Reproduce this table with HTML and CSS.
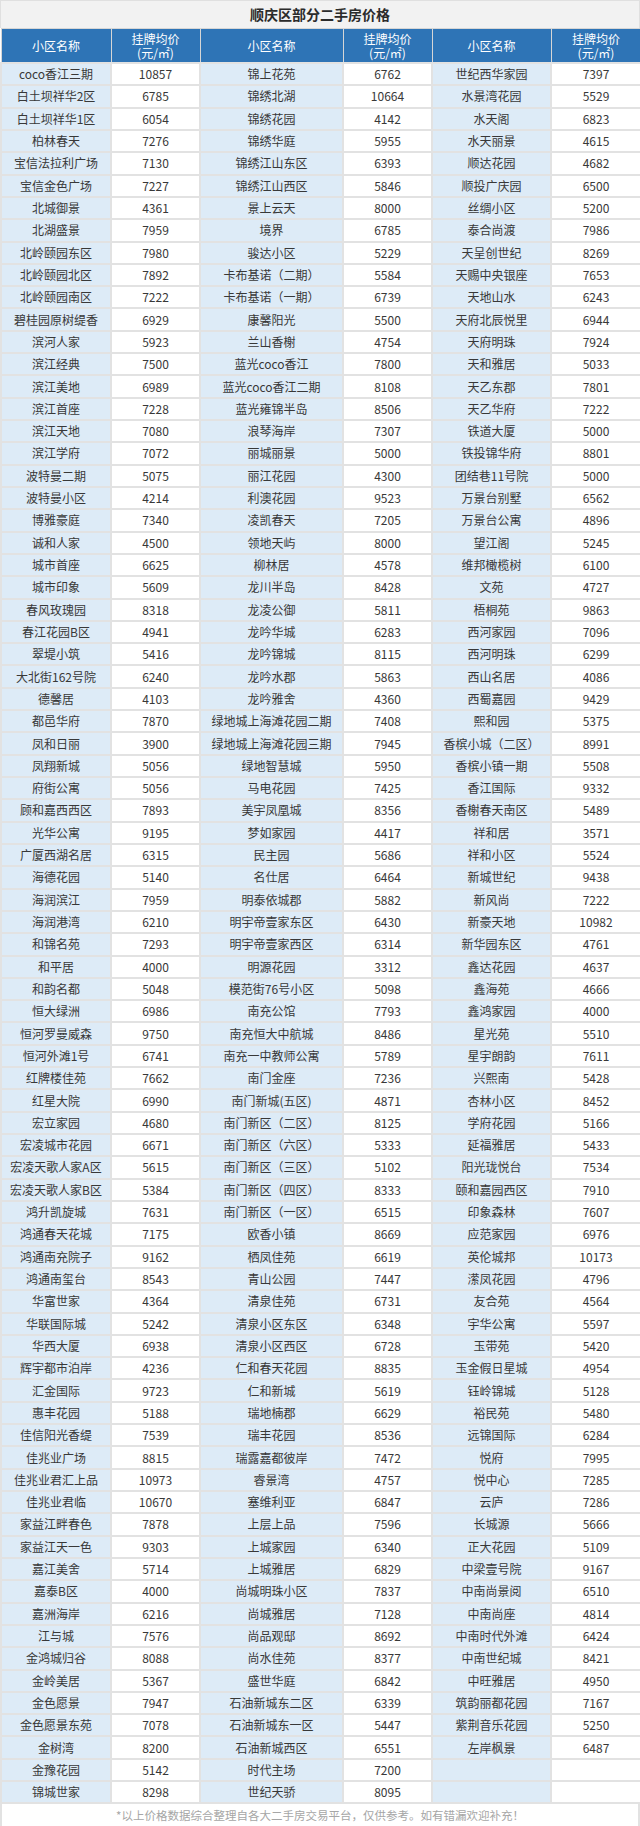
FILE: index.html
```html
<!DOCTYPE html>
<html lang="zh-CN">
<head>
<meta charset="utf-8">
<title>顺庆区部分二手房价格</title>
<link rel="stylesheet" href="styles.css">
</head>
<body>
<div class="sheet">
  <div class="title">顺庆区部分二手房价格</div>
  <table class="prices">
    <colgroup>
      <col class="w-name1"><col class="w-price"><col class="w-name2"><col class="w-price"><col class="w-name3"><col class="w-price-last">
    </colgroup>
    <thead>
      <tr>
        <th>小区名称</th><th>挂牌均价<br>(元/㎡)</th>
        <th>小区名称</th><th>挂牌均价<br>(元/㎡)</th>
        <th>小区名称</th><th>挂牌均价<br>(元/㎡)</th>
      </tr>
    </thead>
    <tbody>
      <tr><td class="n">coco香江三期</td><td>10857</td><td class="n">锦上花苑</td><td>6762</td><td class="n">世纪西华家园</td><td>7397</td></tr>
      <tr><td class="n">白土坝祥华2区</td><td>6785</td><td class="n">锦绣北湖</td><td>10664</td><td class="n">水景湾花园</td><td>5529</td></tr>
      <tr><td class="n">白土坝祥华1区</td><td>6054</td><td class="n">锦绣花园</td><td>4142</td><td class="n">水天阁</td><td>6823</td></tr>
      <tr><td class="n">柏林春天</td><td>7276</td><td class="n">锦绣华庭</td><td>5955</td><td class="n">水天丽景</td><td>4615</td></tr>
      <tr><td class="n">宝信法拉利广场</td><td>7130</td><td class="n">锦绣江山东区</td><td>6393</td><td class="n">顺达花园</td><td>4682</td></tr>
      <tr><td class="n">宝信金色广场</td><td>7227</td><td class="n">锦绣江山西区</td><td>5846</td><td class="n">顺投广庆园</td><td>6500</td></tr>
      <tr><td class="n">北城御景</td><td>4361</td><td class="n">景上云天</td><td>8000</td><td class="n">丝绸小区</td><td>5200</td></tr>
      <tr><td class="n">北湖盛景</td><td>7959</td><td class="n">境界</td><td>6785</td><td class="n">泰合尚渡</td><td>7986</td></tr>
      <tr><td class="n">北岭颐园东区</td><td>7980</td><td class="n">骏达小区</td><td>5229</td><td class="n">天呈创世纪</td><td>8269</td></tr>
      <tr><td class="n">北岭颐园北区</td><td>7892</td><td class="n">卡布基诺（二期）</td><td>5584</td><td class="n">天赐中央银座</td><td>7653</td></tr>
      <tr><td class="n">北岭颐园南区</td><td>7222</td><td class="n">卡布基诺（一期）</td><td>6739</td><td class="n">天地山水</td><td>6243</td></tr>
      <tr><td class="n">碧桂园原树缇香</td><td>6929</td><td class="n">康馨阳光</td><td>5500</td><td class="n">天府北辰悦里</td><td>6944</td></tr>
      <tr><td class="n">滨河人家</td><td>5923</td><td class="n">兰山香榭</td><td>4754</td><td class="n">天府明珠</td><td>7924</td></tr>
      <tr><td class="n">滨江经典</td><td>7500</td><td class="n">蓝光coco香江</td><td>7800</td><td class="n">天和雅居</td><td>5033</td></tr>
      <tr><td class="n">滨江美地</td><td>6989</td><td class="n">蓝光coco香江二期</td><td>8108</td><td class="n">天乙东郡</td><td>7801</td></tr>
      <tr><td class="n">滨江首座</td><td>7228</td><td class="n">蓝光雍锦半岛</td><td>8506</td><td class="n">天乙华府</td><td>7222</td></tr>
      <tr><td class="n">滨江天地</td><td>7080</td><td class="n">浪琴海岸</td><td>7307</td><td class="n">铁道大厦</td><td>5000</td></tr>
      <tr><td class="n">滨江学府</td><td>7072</td><td class="n">丽城丽景</td><td>5000</td><td class="n">铁投锦华府</td><td>8801</td></tr>
      <tr><td class="n">波特曼二期</td><td>5075</td><td class="n">丽江花园</td><td>4300</td><td class="n">团结巷11号院</td><td>5000</td></tr>
      <tr><td class="n">波特曼小区</td><td>4214</td><td class="n">利澳花园</td><td>9523</td><td class="n">万景台别墅</td><td>6562</td></tr>
      <tr><td class="n">博雅豪庭</td><td>7340</td><td class="n">凌凯春天</td><td>7205</td><td class="n">万景台公寓</td><td>4896</td></tr>
      <tr><td class="n">诚和人家</td><td>4500</td><td class="n">领地天屿</td><td>8000</td><td class="n">望江阁</td><td>5245</td></tr>
      <tr><td class="n">城市首座</td><td>6625</td><td class="n">柳林居</td><td>4578</td><td class="n">维邦橄榄树</td><td>6100</td></tr>
      <tr><td class="n">城市印象</td><td>5609</td><td class="n">龙川半岛</td><td>8428</td><td class="n">文苑</td><td>4727</td></tr>
      <tr><td class="n">春风玫瑰园</td><td>8318</td><td class="n">龙凌公御</td><td>5811</td><td class="n">梧桐苑</td><td>9863</td></tr>
      <tr><td class="n">春江花园B区</td><td>4941</td><td class="n">龙吟华城</td><td>6283</td><td class="n">西河家园</td><td>7096</td></tr>
      <tr><td class="n">翠堤小筑</td><td>5416</td><td class="n">龙吟锦城</td><td>8115</td><td class="n">西河明珠</td><td>6299</td></tr>
      <tr><td class="n">大北街162号院</td><td>6240</td><td class="n">龙吟水郡</td><td>5863</td><td class="n">西山名居</td><td>4086</td></tr>
      <tr><td class="n">德馨居</td><td>4103</td><td class="n">龙吟雅舍</td><td>4360</td><td class="n">西蜀嘉园</td><td>9429</td></tr>
      <tr><td class="n">都邑华府</td><td>7870</td><td class="n">绿地城上海滩花园二期</td><td>7408</td><td class="n">熙和园</td><td>5375</td></tr>
      <tr><td class="n">凤和日丽</td><td>3900</td><td class="n">绿地城上海滩花园三期</td><td>7945</td><td class="n">香槟小城（二区）</td><td>8991</td></tr>
      <tr><td class="n">凤翔新城</td><td>5056</td><td class="n">绿地智慧城</td><td>5950</td><td class="n">香槟小镇一期</td><td>5508</td></tr>
      <tr><td class="n">府街公寓</td><td>5056</td><td class="n">马电花园</td><td>7425</td><td class="n">香江国际</td><td>9332</td></tr>
      <tr><td class="n">顾和嘉西西区</td><td>7893</td><td class="n">美宇凤凰城</td><td>8356</td><td class="n">香榭春天南区</td><td>5489</td></tr>
      <tr><td class="n">光华公寓</td><td>9195</td><td class="n">梦如家园</td><td>4417</td><td class="n">祥和居</td><td>3571</td></tr>
      <tr><td class="n">广厦西湖名居</td><td>6315</td><td class="n">民主园</td><td>5686</td><td class="n">祥和小区</td><td>5524</td></tr>
      <tr><td class="n">海德花园</td><td>5140</td><td class="n">名仕居</td><td>6464</td><td class="n">新城世纪</td><td>9438</td></tr>
      <tr><td class="n">海润滨江</td><td>7959</td><td class="n">明泰依城郡</td><td>5882</td><td class="n">新风尚</td><td>7222</td></tr>
      <tr><td class="n">海润港湾</td><td>6210</td><td class="n">明宇帝壹家东区</td><td>6430</td><td class="n">新豪天地</td><td>10982</td></tr>
      <tr><td class="n">和锦名苑</td><td>7293</td><td class="n">明宇帝壹家西区</td><td>6314</td><td class="n">新华园东区</td><td>4761</td></tr>
      <tr><td class="n">和平居</td><td>4000</td><td class="n">明源花园</td><td>3312</td><td class="n">鑫达花园</td><td>4637</td></tr>
      <tr><td class="n">和韵名都</td><td>5048</td><td class="n">模范街76号小区</td><td>5098</td><td class="n">鑫海苑</td><td>4666</td></tr>
      <tr><td class="n">恒大绿洲</td><td>6986</td><td class="n">南充公馆</td><td>7793</td><td class="n">鑫鸿家园</td><td>4000</td></tr>
      <tr><td class="n">恒河罗曼威森</td><td>9750</td><td class="n">南充恒大中航城</td><td>8486</td><td class="n">星光苑</td><td>5510</td></tr>
      <tr><td class="n">恒河外滩1号</td><td>6741</td><td class="n">南充一中教师公寓</td><td>5789</td><td class="n">星宇朗韵</td><td>7611</td></tr>
      <tr><td class="n">红牌楼佳苑</td><td>7662</td><td class="n">南门金座</td><td>7236</td><td class="n">兴熙南</td><td>5428</td></tr>
      <tr><td class="n">红星大院</td><td>6990</td><td class="n">南门新城(五区)</td><td>4871</td><td class="n">杏林小区</td><td>8452</td></tr>
      <tr><td class="n">宏立家园</td><td>4680</td><td class="n">南门新区（二区）</td><td>8125</td><td class="n">学府花园</td><td>5166</td></tr>
      <tr><td class="n">宏凌城市花园</td><td>6671</td><td class="n">南门新区（六区）</td><td>5333</td><td class="n">延福雅居</td><td>5433</td></tr>
      <tr><td class="n">宏凌天歌人家A区</td><td>5615</td><td class="n">南门新区（三区）</td><td>5102</td><td class="n">阳光珑悦台</td><td>7534</td></tr>
      <tr><td class="n">宏凌天歌人家B区</td><td>5384</td><td class="n">南门新区（四区）</td><td>8333</td><td class="n">颐和嘉园西区</td><td>7910</td></tr>
      <tr><td class="n">鸿升凯旋城</td><td>7631</td><td class="n">南门新区（一区）</td><td>6515</td><td class="n">印象森林</td><td>7607</td></tr>
      <tr><td class="n">鸿通春天花城</td><td>7175</td><td class="n">欧香小镇</td><td>8669</td><td class="n">应范家园</td><td>6976</td></tr>
      <tr><td class="n">鸿通南充院子</td><td>9162</td><td class="n">栖凤佳苑</td><td>6619</td><td class="n">英伦城邦</td><td>10173</td></tr>
      <tr><td class="n">鸿通南玺台</td><td>8543</td><td class="n">青山公园</td><td>7447</td><td class="n">潆凤花园</td><td>4796</td></tr>
      <tr><td class="n">华富世家</td><td>4364</td><td class="n">清泉佳苑</td><td>6731</td><td class="n">友合苑</td><td>4564</td></tr>
      <tr><td class="n">华联国际城</td><td>5242</td><td class="n">清泉小区东区</td><td>6348</td><td class="n">宇华公寓</td><td>5597</td></tr>
      <tr><td class="n">华西大厦</td><td>6938</td><td class="n">清泉小区西区</td><td>6728</td><td class="n">玉带苑</td><td>5420</td></tr>
      <tr><td class="n">辉宇都市泊岸</td><td>4236</td><td class="n">仁和春天花园</td><td>8835</td><td class="n">玉金假日星城</td><td>4954</td></tr>
      <tr><td class="n">汇金国际</td><td>9723</td><td class="n">仁和新城</td><td>5619</td><td class="n">钰岭锦城</td><td>5128</td></tr>
      <tr><td class="n">惠丰花园</td><td>5188</td><td class="n">瑞地楠郡</td><td>6629</td><td class="n">裕民苑</td><td>5480</td></tr>
      <tr><td class="n">佳信阳光香缇</td><td>7539</td><td class="n">瑞丰花园</td><td>8536</td><td class="n">远锦国际</td><td>6284</td></tr>
      <tr><td class="n">佳兆业广场</td><td>8815</td><td class="n">瑞露嘉都彼岸</td><td>7472</td><td class="n">悦府</td><td>7995</td></tr>
      <tr><td class="n">佳兆业君汇上品</td><td>10973</td><td class="n">睿景湾</td><td>4757</td><td class="n">悦中心</td><td>7285</td></tr>
      <tr><td class="n">佳兆业君临</td><td>10670</td><td class="n">塞维利亚</td><td>6847</td><td class="n">云庐</td><td>7286</td></tr>
      <tr><td class="n">家益江畔春色</td><td>7878</td><td class="n">上层上品</td><td>7596</td><td class="n">长城源</td><td>5666</td></tr>
      <tr><td class="n">家益江天一色</td><td>9303</td><td class="n">上城家园</td><td>6340</td><td class="n">正大花园</td><td>5109</td></tr>
      <tr><td class="n">嘉江美舍</td><td>5714</td><td class="n">上城雅居</td><td>6829</td><td class="n">中梁壹号院</td><td>9167</td></tr>
      <tr><td class="n">嘉泰B区</td><td>4000</td><td class="n">尚城明珠小区</td><td>7837</td><td class="n">中南尚景阅</td><td>6510</td></tr>
      <tr><td class="n">嘉洲海岸</td><td>6216</td><td class="n">尚城雅居</td><td>7128</td><td class="n">中南尚座</td><td>4814</td></tr>
      <tr><td class="n">江与城</td><td>7576</td><td class="n">尚品观邸</td><td>8692</td><td class="n">中南时代外滩</td><td>6424</td></tr>
      <tr><td class="n">金鸿城归谷</td><td>8088</td><td class="n">尚水佳苑</td><td>8377</td><td class="n">中南世纪城</td><td>8421</td></tr>
      <tr><td class="n">金岭美居</td><td>5367</td><td class="n">盛世华庭</td><td>6842</td><td class="n">中旺雅居</td><td>4950</td></tr>
      <tr><td class="n">金色愿景</td><td>7947</td><td class="n">石油新城东二区</td><td>6339</td><td class="n">筑韵丽都花园</td><td>7167</td></tr>
      <tr><td class="n">金色愿景东苑</td><td>7078</td><td class="n">石油新城东一区</td><td>5447</td><td class="n">紫荆音乐花园</td><td>5250</td></tr>
      <tr><td class="n">金树湾</td><td>8200</td><td class="n">石油新城西区</td><td>6551</td><td class="n">左岸枫景</td><td>6487</td></tr>
      <tr><td class="n">金豫花园</td><td>5142</td><td class="n">时代主场</td><td>7200</td><td class="n"></td><td></td></tr>
      <tr><td class="n">锦城世家</td><td>8298</td><td class="n">世纪天骄</td><td>8095</td><td class="n"></td><td></td></tr>
    </tbody>
  </table>
  <div class="note">*以上价格数据综合整理自各大二手房交易平台，仅供参考。如有错漏欢迎补充！</div>
</div>
</body>
</html>
```

FILE: styles.css
```css
html, body {
  margin: 0;
  padding: 0;
  background: #ffffff;
}

body {
  width: 640px;
  font-family: "Liberation Sans Narrow", "Liberation Sans", "Noto Sans CJK SC", sans-serif;
  color: #333333;
}

.sheet {
  width: 640px;
  box-sizing: border-box;
}

.title {
  height: 28px;
  box-sizing: border-box;
  background: #f2f2f2;
  border: 1px solid #e0e0e0;
  border-bottom: none;
  font-family: "Noto Sans CJK SC", sans-serif;
  font-size: 14px;
  font-weight: 700;
  line-height: 27px;
  text-align: center;
  color: #2b2b2b;
}

.prices {
  width: 640px;
  table-layout: fixed;
  border-collapse: collapse;
  font-family: "Liberation Sans Narrow", "Noto Sans CJK SC", sans-serif;
  font-size: 12px;
}

.w-name1 { width: 110px; }
.w-price { width: 89px; }
.w-name2 { width: 143px; }
.w-name3 { width: 119px; }
.w-price-last { width: 90px; }

.prices th {
  height: 33px;
  padding: 0;
  background: #2e74b6;
  color: #ffffff;
  font-weight: 400;
  font-family: "Noto Sans CJK SC", sans-serif;
  font-size: 12px;
  line-height: 14px;
  border: 1px solid #d6d6d6;
  text-align: center;
  vertical-align: middle;
}

.prices tbody tr {
  height: 22.32px;
}

.prices td {
  padding: 0;
  border: 2px solid #e2e2e2;
  text-align: center;
  vertical-align: middle;
  line-height: 16px;
  white-space: nowrap;
  overflow: hidden;
  color: #383838;
  background: #ffffff;
}

.prices td.n {
  background: #ddebf7;
}

.note {
  height: 24px;
  box-sizing: border-box;
  border: 2px solid #e2e2e2;
  border-top: none;
  font-family: "Noto Sans CJK SC", sans-serif;
  font-size: 11.5px;
  line-height: 22px;
  text-align: center;
  color: #a6a6a6;
}
```
